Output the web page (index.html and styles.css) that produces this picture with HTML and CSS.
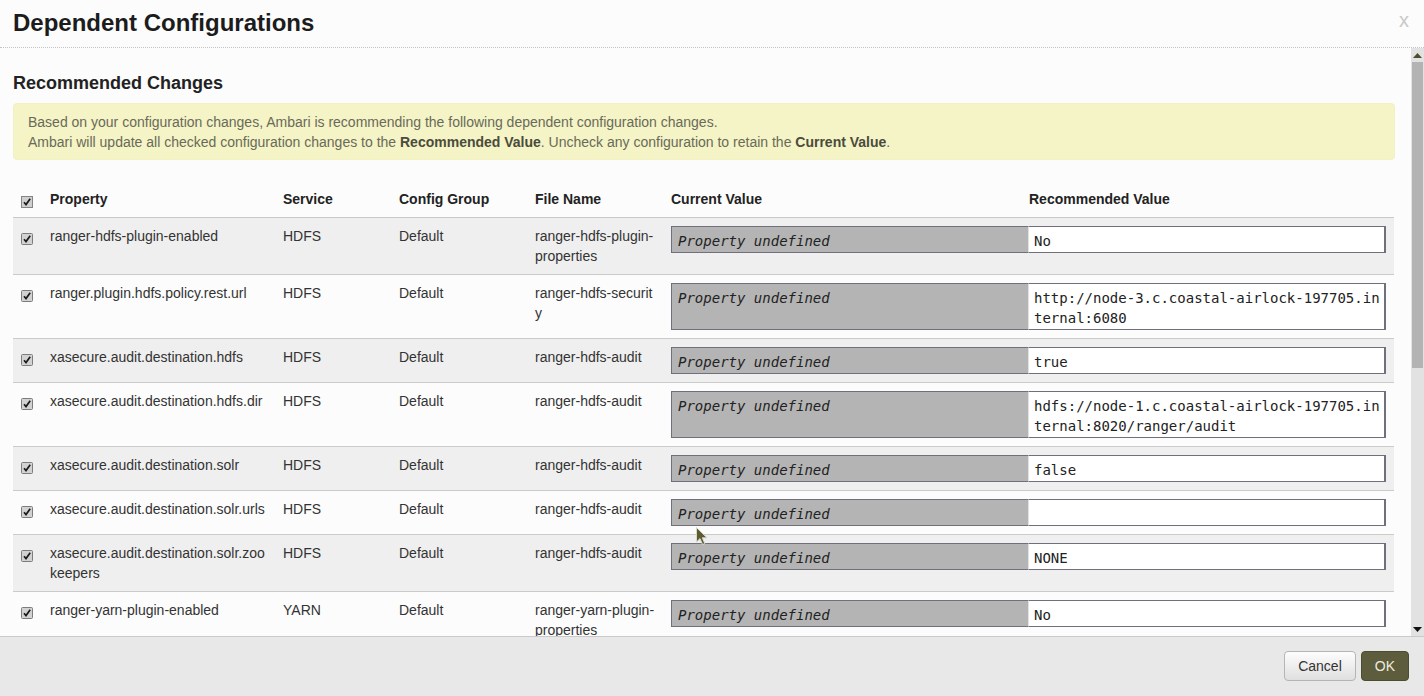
FILE: index.html
```html
<!DOCTYPE html>
<html>
<head>
<meta charset="utf-8">
<title>Dependent Configurations</title>
<link rel="stylesheet" href="styles.css">
</head>
<body>
<div class="modal">
  <div class="modal-header">
    <h3 class="modal-title">Dependent Configurations</h3>
    <span class="close">x</span>
  </div>
  <div class="modal-main">
    <div class="modal-body">
      <h4 class="section-title">Recommended Changes</h4>
      <div class="alert">Based on your configuration changes, Ambari is recommending the following dependent configuration changes.<br>Ambari will update all checked configuration changes to the <b>Recommended Value</b>. Uncheck any configuration to retain the <b>Current Value</b>.</div>
      <table class="changes">
        <colgroup>
          <col class="w-check"><col class="w-prop"><col class="w-service"><col class="w-group"><col class="w-file"><col class="w-cur"><col class="w-rec">
        </colgroup>
        <thead>
          <tr>
            <th class="c-check"><svg class="cb" width="12" height="12" viewBox="0 0 12 12"><rect x="0.5" y="0.5" width="11" height="11" fill="#cfcfcf" stroke="#222" stroke-dasharray="1 1"/><path d="M3 6.3 L5 8.6 L9.2 2.8" fill="none" stroke="#1a1a1a" stroke-width="1.7"/></svg></th>
            <th>Property</th>
            <th>Service</th>
            <th>Config Group</th>
            <th>File Name</th>
            <th>Current Value</th>
            <th class="th-rec">Recommended Value</th>
          </tr>
        </thead>
        <tbody>
          <tr>
            <td class="c-check"><svg class="cb" width="12" height="12" viewBox="0 0 12 12"><rect x="0.5" y="0.5" width="11" height="11" rx="1" fill="#d2d2d2" stroke="#7d7d7d"/><path d="M3 6.3 L5 8.6 L9.2 2.8" fill="none" stroke="#1a1a1a" stroke-width="1.7"/></svg></td>
            <td>ranger-hdfs-plugin-enabled</td><td>HDFS</td><td>Default</td><td>ranger-hdfs-plugin-properties</td>
            <td colspan="2" class="vals"><div class="vpair"><div class="cur">Property undefined</div><div class="rec">No</div></div></td>
          </tr>
          <tr>
            <td class="c-check"><svg class="cb" width="12" height="12" viewBox="0 0 12 12"><rect x="0.5" y="0.5" width="11" height="11" rx="1" fill="#d2d2d2" stroke="#7d7d7d"/><path d="M3 6.3 L5 8.6 L9.2 2.8" fill="none" stroke="#1a1a1a" stroke-width="1.7"/></svg></td>
            <td>ranger.plugin.hdfs.policy.rest.url</td><td>HDFS</td><td>Default</td><td>ranger-hdfs-security</td>
            <td colspan="2" class="vals"><div class="vpair"><div class="cur">Property undefined</div><div class="rec">http://node-3.c.coastal-airlock-197705.internal:6080</div></div></td>
          </tr>
          <tr>
            <td class="c-check"><svg class="cb" width="12" height="12" viewBox="0 0 12 12"><rect x="0.5" y="0.5" width="11" height="11" rx="1" fill="#d2d2d2" stroke="#7d7d7d"/><path d="M3 6.3 L5 8.6 L9.2 2.8" fill="none" stroke="#1a1a1a" stroke-width="1.7"/></svg></td>
            <td>xasecure.audit.destination.hdfs</td><td>HDFS</td><td>Default</td><td>ranger-hdfs-audit</td>
            <td colspan="2" class="vals"><div class="vpair"><div class="cur">Property undefined</div><div class="rec">true</div></div></td>
          </tr>
          <tr>
            <td class="c-check"><svg class="cb" width="12" height="12" viewBox="0 0 12 12"><rect x="0.5" y="0.5" width="11" height="11" rx="1" fill="#d2d2d2" stroke="#7d7d7d"/><path d="M3 6.3 L5 8.6 L9.2 2.8" fill="none" stroke="#1a1a1a" stroke-width="1.7"/></svg></td>
            <td>xasecure.audit.destination.hdfs.dir</td><td>HDFS</td><td>Default</td><td>ranger-hdfs-audit</td>
            <td colspan="2" class="vals"><div class="vpair"><div class="cur">Property undefined</div><div class="rec">hdfs://node-1.c.coastal-airlock-197705.internal:8020/ranger/audit</div></div></td>
          </tr>
          <tr>
            <td class="c-check"><svg class="cb" width="12" height="12" viewBox="0 0 12 12"><rect x="0.5" y="0.5" width="11" height="11" rx="1" fill="#d2d2d2" stroke="#7d7d7d"/><path d="M3 6.3 L5 8.6 L9.2 2.8" fill="none" stroke="#1a1a1a" stroke-width="1.7"/></svg></td>
            <td>xasecure.audit.destination.solr</td><td>HDFS</td><td>Default</td><td>ranger-hdfs-audit</td>
            <td colspan="2" class="vals"><div class="vpair"><div class="cur">Property undefined</div><div class="rec">false</div></div></td>
          </tr>
          <tr>
            <td class="c-check"><svg class="cb" width="12" height="12" viewBox="0 0 12 12"><rect x="0.5" y="0.5" width="11" height="11" rx="1" fill="#d2d2d2" stroke="#7d7d7d"/><path d="M3 6.3 L5 8.6 L9.2 2.8" fill="none" stroke="#1a1a1a" stroke-width="1.7"/></svg></td>
            <td>xasecure.audit.destination.solr.urls</td><td>HDFS</td><td>Default</td><td>ranger-hdfs-audit</td>
            <td colspan="2" class="vals"><div class="vpair"><div class="cur">Property undefined</div><div class="rec"></div></div></td>
          </tr>
          <tr>
            <td class="c-check"><svg class="cb" width="12" height="12" viewBox="0 0 12 12"><rect x="0.5" y="0.5" width="11" height="11" rx="1" fill="#d2d2d2" stroke="#7d7d7d"/><path d="M3 6.3 L5 8.6 L9.2 2.8" fill="none" stroke="#1a1a1a" stroke-width="1.7"/></svg></td>
            <td>xasecure.audit.destination.solr.zookeepers</td><td>HDFS</td><td>Default</td><td>ranger-hdfs-audit</td>
            <td colspan="2" class="vals"><div class="vpair"><div class="cur">Property undefined</div><div class="rec">NONE</div></div></td>
          </tr>
          <tr>
            <td class="c-check"><svg class="cb" width="12" height="12" viewBox="0 0 12 12"><rect x="0.5" y="0.5" width="11" height="11" rx="1" fill="#d2d2d2" stroke="#7d7d7d"/><path d="M3 6.3 L5 8.6 L9.2 2.8" fill="none" stroke="#1a1a1a" stroke-width="1.7"/></svg></td>
            <td>ranger-yarn-plugin-enabled</td><td>YARN</td><td>Default</td><td>ranger-yarn-plugin-properties</td>
            <td colspan="2" class="vals"><div class="vpair"><div class="cur">Property undefined</div><div class="rec">No</div></div></td>
          </tr>
        </tbody>
      </table>
    </div>
    <div class="scrollbar">
      <div class="sb-btn"><svg width="9" height="5" viewBox="0 0 9 5"><path d="M0 5 L4.5 0 L9 5 Z" fill="#4e4d2e"/></svg></div>
      <div class="sb-track"><div class="sb-thumb"></div></div>
      <div class="sb-btn"><svg width="9" height="5" viewBox="0 0 9 5"><path d="M0 0 L9 0 L4.5 5 Z" fill="#111"/></svg></div>
    </div>
  </div>
  <div class="modal-footer">
    <button class="btn">Cancel</button>
    <button class="btn btn-ok">OK</button>
  </div>
</div>
<svg class="cursor" width="13" height="20" viewBox="0 0 13 20"><path d="M0.5 0.5 L0.5 15 L4 11.6 L6.6 17.6 L8.8 16.6 L6.3 10.8 L11 10.8 Z" fill="#5c5b34" stroke="#d8d8c8" stroke-width="1"/></svg>
</body>
</html>
```
FILE: styles.css
```css
* { box-sizing: border-box; }
html, body { margin: 0; padding: 0; }
body {
  width: 1424px;
  height: 696px;
  overflow: hidden;
  position: relative;
  font-family: "Liberation Sans", Arial, sans-serif;
  font-size: 14px;
  line-height: 20px;
  color: #333;
  background: #fcfcfc;
}
.modal { display: flex; flex-direction: column; height: 696px; }
.modal-header {
  display: flex;
  justify-content: space-between;
  align-items: flex-start;
  height: 48px;
  padding: 8px 15px 0 13px;
  border-bottom: 1px dotted #c4c4c4;
}
.modal-title { margin: 0; font-size: 24px; line-height: 30px; font-weight: bold; color: #1c1c1c; }
.close { font-size: 20px; line-height: 24px; color: #c9c9c9; }

.modal-main { display: flex; flex: 1; min-height: 0; }
.modal-body { flex: 1; overflow: hidden; padding: 25px 16px 0 13px; }
.section-title { margin: 0 0 10px; font-size: 18px; line-height: 20px; font-weight: bold; color: #222; }
.alert {
  background: #f4f4c6;
  border: 1px solid #f1f1c2;
  border-radius: 4px;
  padding: 8px 14px 7px;
  color: #6a6a58;
}
.alert b { color: #4b4b3c; }

.changes {
  margin-top: 21px;
  width: 1381px;
  table-layout: fixed;
  border-collapse: separate;
  border-spacing: 0;
}
.w-check { width: 29px; }
.w-prop { width: 233px; }
.w-service { width: 116px; }
.w-group { width: 136px; }
.w-file { width: 136px; }
.w-cur { width: 365px; }
.w-rec { width: 366px; }
.changes th {
  text-align: left;
  font-weight: bold;
  color: #222;
  padding: 8px;
  vertical-align: top;
  border-bottom: 1px solid #c9c9c9;
}
.changes th.th-rec { padding-left: 1px; }
.changes td {
  padding: 8px;
  vertical-align: top;
  border-bottom: 1px solid #cbcbcb;
  word-break: break-all;
}
.changes tbody tr:nth-child(odd) td { background: #efefef; }
.changes .c-check { padding: 8px 0 8px 8px; }
.cb { display: block; }
.changes td.c-check .cb { margin-top: 7px; }
.changes th.c-check .cb { margin-top: 7px; }

.vpair { display: flex; }
.cur, .rec {
  font-family: "DejaVu Sans Mono", "Liberation Mono", monospace;
  font-size: 14px;
  line-height: 20px;
  color: #222;
  min-height: 27px;
}
.cur {
  width: 357px;
  flex: none;
  background: #b4b4b4;
  border: 1px solid #726f7d;
  border-right: 0;
  padding: 4px 6px 1px;
  font-style: italic;
}
.rec {
  flex: 1;
  background: #fff;
  border: 1px solid #726f7d;
  border-left: 1px solid #e2e2e2;
  border-right-width: 2px;
  padding: 4px 3px 1px 5px;
  word-break: break-all;
}

.scrollbar {
  width: 13px;
  display: flex;
  flex-direction: column;
  background: #e2e2e2;
}
.sb-btn { height: 14px; display: flex; align-items: center; justify-content: center; flex: none; }
.sb-track { flex: 1; padding: 0 1px; }
.sb-thumb { height: 306px; background: #b3b3b3; }

.modal-footer {
  display: flex;
  justify-content: flex-end;
  gap: 5px;
  height: 60px;
  padding: 14px 15px 0;
  border-top: 1px solid #cacaca;
  background: #e8e8e8;
}
.btn {
  height: 30px;
  padding: 0 13px;
  font-family: "Liberation Sans", Arial, sans-serif;
  font-size: 14px;
  color: #333;
  border: 1px solid #b5b5b5;
  border-radius: 4px;
  background: linear-gradient(#fdfdfd, #dfdfdf);
}
.btn-ok {
  padding: 0 13px;
  background: #5d5c3c;
  border-color: #4d4c30;
  color: #ececdf;
}

.cursor { position: absolute; left: 696px; top: 527px; }
```
